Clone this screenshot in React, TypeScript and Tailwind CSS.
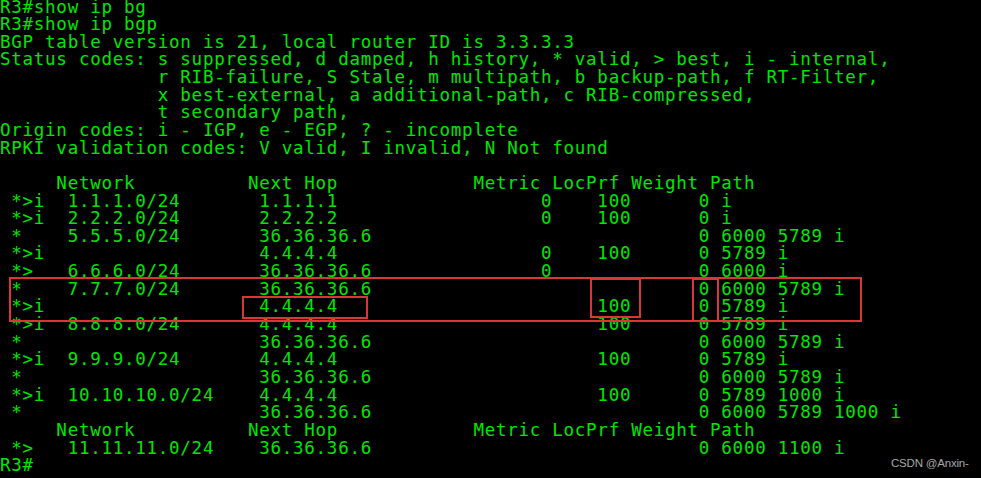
import React from "react";

const pad = (s: string, n: number) => s.padEnd(n, " ");

// build one bgp table row with IOS column alignment
const row = (
    status: string,
    net: string,
    hop: string,
    metric: string,
    locprf: string,
    weight: string,
    path: string
) => {
    let s = pad(" " + status, 6) + net;
    s = pad(s, 23) + hop;
    s = pad(s, 49 - metric.length) + metric;
    s = pad(s, 56 - locprf.length) + locprf;
    s = pad(s, 63 - weight.length) + weight;
    return s + " " + path;
};

const header = "     Network          Next Hop            Metric LocPrf Weight Path";

const lines: string[] = [
    "R3#show ip bg",
    "R3#show ip bgp",
    "BGP table version is 21, local router ID is 3.3.3.3",
    "Status codes: s suppressed, d damped, h history, * valid, > best, i - internal,",
    "              r RIB-failure, S Stale, m multipath, b backup-path, f RT-Filter,",
    "              x best-external, a additional-path, c RIB-compressed,",
    "              t secondary path,",
    "Origin codes: i - IGP, e - EGP, ? - incomplete",
    "RPKI validation codes: V valid, I invalid, N Not found",
    "",
    header,
    row("*>i", "1.1.1.0/24", "1.1.1.1", "0", "100", "0", "i"),
    row("*>i", "2.2.2.0/24", "2.2.2.2", "0", "100", "0", "i"),
    row("*", "5.5.5.0/24", "36.36.36.6", "", "", "0", "6000 5789 i"),
    row("*>i", "", "4.4.4.4", "0", "100", "0", "5789 i"),
    row("*>", "6.6.6.0/24", "36.36.36.6", "0", "", "0", "6000 i"),
    row("*", "7.7.7.0/24", "36.36.36.6", "", "", "0", "6000 5789 i"),
    row("*>i", "", "4.4.4.4", "", "100", "0", "5789 i"),
    row("*>i", "8.8.8.0/24", "4.4.4.4", "", "100", "0", "5789 i"),
    row("*", "", "36.36.36.6", "", "", "0", "6000 5789 i"),
    row("*>i", "9.9.9.0/24", "4.4.4.4", "", "100", "0", "5789 i"),
    row("*", "", "36.36.36.6", "", "", "0", "6000 5789 i"),
    row("*>i", "10.10.10.0/24", "4.4.4.4", "", "100", "0", "5789 1000 i"),
    row("*", "", "36.36.36.6", "", "", "0", "6000 5789 1000 i"),
    header,
    row("*>", "11.11.11.0/24", "36.36.36.6", "", "", "0", "6000 1100 i"),
    "R3#",
];

const App: React.FC = () => {
    return (
        <div className="relative w-[981px] h-[478px] bg-black overflow-hidden">
            <pre className="-mt-[1.5px] text-[#00e600] text-[17.5px] leading-[17.65px] tracking-[0.735px] font-['DejaVu_Sans_Mono',monospace] whitespace-pre">
                {lines.map((l, i) => (
                    <div key={i} className="h-[17.65px]">
                        {l}
                    </div>
                ))}
            </pre>

            {/* highlight boxes */}
            <div className="absolute left-[9px] top-[277px] w-[853px] h-[45px] border-2 border-[#dc3535]" />
            <div className="absolute left-[242px] top-[296px] w-[126px] h-[23px] border-2 border-[#dc3535]" />
            <div className="absolute left-[590px] top-[278px] w-[51px] h-[40px] border-2 border-[#dc3535]" />
            <div className="absolute left-[692px] top-[278px] w-[27px] h-[44px] border-2 border-[#dc3535]" />

            <div className="absolute left-[891px] top-[455px] text-[11.5px] tracking-[-0.2px] text-[#a8a8a8] font-['Liberation_Sans',sans-serif]">
                CSDN @Anxin-
            </div>
        </div>
    );
};

export default App;
